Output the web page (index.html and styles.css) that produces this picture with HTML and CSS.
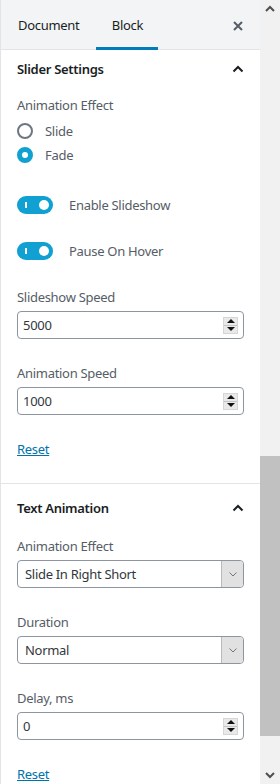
FILE: index.html
```html
<!DOCTYPE html>
<html lang="en">

<head>
    <meta charset="UTF-8">
    <meta name="viewport" content="width=device-width, initial-scale=1.0">
    <title>Block Settings</title>
    <link rel="stylesheet" href="styles.css">
</head>

<body>
    <div class="wrap">
        <div class="panel">
            <div class="tabs">
                <div class="tab">Document</div>
                <div class="tab active">Block</div>
                <div class="close">
                    <svg width="10" height="10" viewBox="0 0 10 10"><path d="M1 1L9 9M9 1L1 9" stroke="#555d66" stroke-width="2" /></svg>
                </div>
            </div>

            <div class="section first">
                <div class="section-title">
                    <span>Slider Settings</span>
                    <svg class="chevron" width="12" height="8" viewBox="0 0 12 8"><path d="M1.5 6.5L6 2L10.5 6.5" fill="none" stroke="#191e23" stroke-width="2" /></svg>
                </div>
                <div class="section-body">
                    <div class="group radios">
                        <div class="label">Animation Effect</div>
                        <div class="radio-row"><span class="radio"></span>Slide</div>
                        <div class="radio-row"><span class="radio checked"></span>Fade</div>
                    </div>

                    <div class="toggle-row">
                        <span class="toggle"><span class="bar"></span><span class="knob"></span></span>
                        Enable Slideshow
                    </div>
                    <div class="toggle-row">
                        <span class="toggle"><span class="bar"></span><span class="knob"></span></span>
                        Pause On Hover
                    </div>

                    <div class="group">
                        <div class="label">Slideshow Speed</div>
                        <div class="field">
                            <span>5000</span>
                            <span class="spin"><span class="up"></span><span class="down"></span></span>
                        </div>
                    </div>

                    <div class="group">
                        <div class="label">Animation Speed</div>
                        <div class="field">
                            <span>1000</span>
                            <span class="spin"><span class="up"></span><span class="down"></span></span>
                        </div>
                    </div>

                    <a class="reset" href="#">Reset</a>
                </div>
            </div>

            <div class="section">
                <div class="section-title">
                    <span>Text Animation</span>
                    <svg class="chevron" width="12" height="8" viewBox="0 0 12 8"><path d="M1.5 6.5L6 2L10.5 6.5" fill="none" stroke="#191e23" stroke-width="2" /></svg>
                </div>
                <div class="section-body">
                    <div class="group">
                        <div class="label">Animation Effect</div>
                        <div class="field select">
                            <span>Slide In Right Short</span>
                            <span class="arrow"><svg width="8" height="5" viewBox="0 0 8 5"><path d="M0.5 0.5L4 4L7.5 0.5" fill="none" stroke="#6c7781" stroke-width="1" /></svg></span>
                        </div>
                    </div>

                    <div class="group">
                        <div class="label">Duration</div>
                        <div class="field select">
                            <span>Normal</span>
                            <span class="arrow"><svg width="8" height="5" viewBox="0 0 8 5"><path d="M0.5 0.5L4 4L7.5 0.5" fill="none" stroke="#6c7781" stroke-width="1" /></svg></span>
                        </div>
                    </div>

                    <div class="group">
                        <div class="label">Delay, ms</div>
                        <div class="field">
                            <span>0</span>
                            <span class="spin"><span class="up"></span><span class="down"></span></span>
                        </div>
                    </div>

                    <a class="reset" href="#">Reset</a>
                </div>
            </div>
        </div>

        <div class="scrollbar">
            <div class="sb-btn">
                <svg width="10" height="7" viewBox="0 0 10 7"><path d="M1 6L5 2L9 6" fill="none" stroke="#505050" stroke-width="2" /></svg>
            </div>
            <div class="sb-track"><div class="sb-thumb"></div></div>
            <div class="sb-btn">
                <svg width="10" height="7" viewBox="0 0 10 7"><path d="M1 1L5 5L9 1" fill="none" stroke="#505050" stroke-width="2" /></svg>
            </div>
        </div>
    </div>
</body>

</html>
```

FILE: styles.css
```css
body {
    margin: 0;
    font-family: "Noto Sans", sans-serif;
    font-size: 13px;
    letter-spacing: -0.3px;
    color: #191e23;
    overflow: hidden;
}

.wrap {
    display: flex;
    height: 784px;
    width: 280px;
}

.panel {
    width: 259px;
    border-left: 1px solid #e2e4e7;
    background-color: #fff;
    overflow: hidden;
}

/* tabs */
.tabs {
    display: flex;
    align-items: flex-start;
    height: 49px;
    background-color: #f3f4f5;
    border-bottom: 1px solid #e2e4e7;
}

.tab {
    height: 50px;
    margin-bottom: -1px;
    padding: 3px 17px 0;
    line-height: 44px;
    color: #191e23;
    box-sizing: border-box;
    border-bottom: 3px solid transparent;
}

.tab.active {
    width: 62px;
    padding: 3px 0 0;
    text-align: center;
    border-bottom-color: #007cba;
}

.close {
    align-self: center;
    margin-left: auto;
    margin-right: 17px;
    margin-top: 2px;
    display: flex;
}

/* sections */
.section {
    border-bottom: 1px solid #e2e4e7;
}

.section:last-child {
    border-bottom: none;
}

.section-title {
    display: flex;
    align-items: center;
    justify-content: space-between;
    padding: 15px 16px;
    line-height: 18px;
    font-weight: 600;
}

.section.first .section-title {
    padding: 10px 16px 12px;
}

.section-body {
    padding: 5px 16px 25px;
}

.section.first .section-body {
    padding-top: 6px;
}

.label {
    color: #555d66;
    line-height: 18px;
    margin-bottom: 5px;
}

.group {
    margin-bottom: 25px;
}

.group.radios {
    margin-bottom: 29px;
}

.radio-row {
    display: flex;
    align-items: center;
    height: 24px;
    color: #555d66;
}

.radio {
    width: 16px;
    height: 16px;
    box-sizing: border-box;
    border: 2px solid #6c7781;
    border-radius: 50%;
    margin: 0 12px 0 0;
}

.radio.checked {
    border: 5px solid #11a0d2;
    background-color: #fff;
}

.toggle-row {
    display: flex;
    align-items: center;
    height: 18px;
    margin-bottom: 28px;
    color: #555d66;
}

.toggle {
    position: relative;
    width: 36px;
    height: 18px;
    border-radius: 9px;
    background-color: #11a0d2;
    margin-right: 16px;
}

.toggle .bar {
    position: absolute;
    left: 8px;
    top: 6px;
    width: 2px;
    height: 6px;
    background-color: #fff;
}

.toggle .knob {
    position: absolute;
    right: 4px;
    top: 4px;
    width: 10px;
    height: 10px;
    border-radius: 50%;
    background-color: #fff;
}

/* inputs */
.field {
    display: flex;
    align-items: center;
    height: 28px;
    box-sizing: border-box;
    border: 1px solid #8d96a0;
    border-radius: 4px;
    padding: 0 5px;
    color: #32373c;
}

.field span:first-child {
    flex: 1;
}

.spin {
    display: flex;
    flex-direction: column;
    width: 15px;
    height: 17px;
    background-color: #e9e9e9;
    border: 1px solid #d6d6d6;
    box-sizing: border-box;
}

.spin .up,
.spin .down {
    flex: 1;
    display: flex;
    align-items: center;
    justify-content: center;
}

.spin .up {
    border-bottom: 1px solid #c4c4c4;
}

.spin .up::after {
    content: "";
    border-left: 4px solid transparent;
    border-right: 4px solid transparent;
    border-bottom: 4px solid #111;
}

.spin .down::after {
    content: "";
    border-left: 4px solid transparent;
    border-right: 4px solid transparent;
    border-top: 4px solid #111;
}

.field.select {
    padding: 0 0 0 7px;
    overflow: hidden;
}

.select .arrow {
    width: 21px;
    height: 26px;
    display: flex;
    align-items: center;
    justify-content: center;
    background-color: #e1e1e1;
    border-left: 1px solid #b9b9b9;
    border-radius: 0 3px 3px 0;
}

.reset {
    display: inline-block;
    color: #0073aa;
    line-height: 18px;
    text-decoration: underline;
}

/* fake scrollbar */
.scrollbar {
    width: 20px;
    display: flex;
    flex-direction: column;
    background-color: #f1f1f1;
}

.sb-btn {
    height: 17px;
    display: flex;
    align-items: center;
    justify-content: center;
}

.sb-track {
    flex: 1;
    display: flex;
    flex-direction: column;
    justify-content: flex-end;
    padding-bottom: 31px;
}

.sb-thumb {
    height: 280px;
    background-color: #c1c1c1;
}
```
